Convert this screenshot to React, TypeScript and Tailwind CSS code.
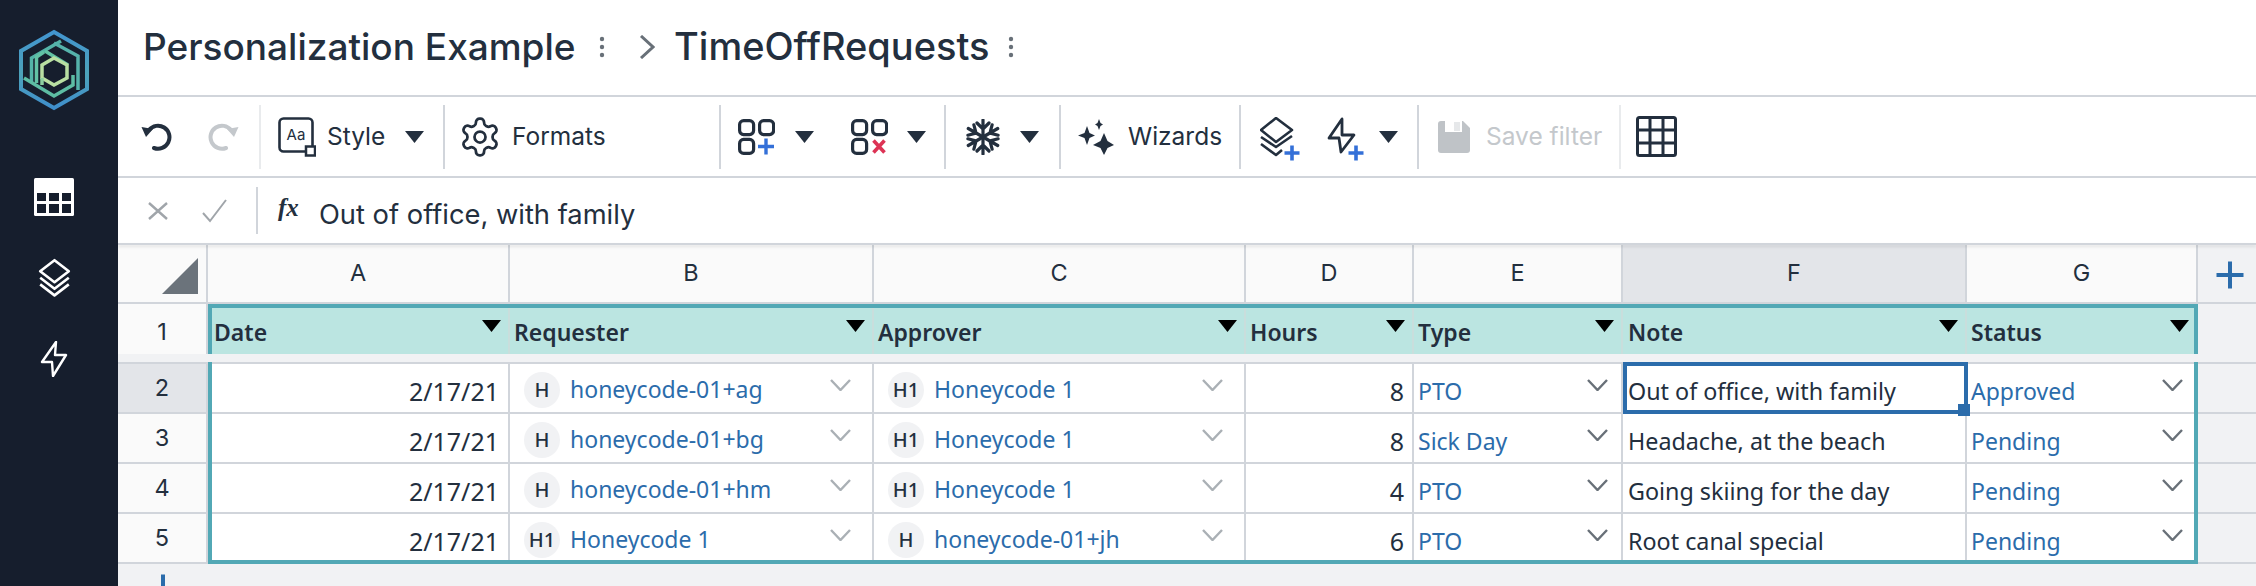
import React from "react";

const cols = "grid grid-cols-[90px_302px_364px_372px_168px_209px_344px_231px]";
const ink = "#232f3e";
const blue = "#2b6cab";
const plusBlue = "#3470d8";

function Tri({ className = "", color = ink }: { className?: string; color?: string }) {
  return (
    <svg width="19" height="12" viewBox="0 0 19 12" className={className}>
      <path d="M0 0H19L9.5 12Z" fill={color} />
    </svg>
  );
}

function Chevron({ dark = false }: { dark?: boolean }) {
  return (
    <svg width="21" height="12" viewBox="0 0 21 12" className="mt-[15px] ml-auto shrink-0">
      <path d="M1 1L10.5 11L20 1" fill="none" stroke={dark ? "#687078" : "#aab0b5"} strokeWidth="2.4" />
    </svg>
  );
}

function Dots() {
  return (
    <svg width="6" height="22" viewBox="0 0 6 22" className="shrink-0">
      <circle cx="3" cy="3" r="2.2" fill="#687078" />
      <circle cx="3" cy="11" r="2.2" fill="#687078" />
      <circle cx="3" cy="19" r="2.2" fill="#687078" />
    </svg>
  );
}

function Logo() {
  return (
    <svg width="76" height="84" viewBox="16 28 76 84">
      <defs>
        <linearGradient id="lg" x1="0" y1="0" x2="0" y2="1">
          <stop offset="0" stopColor="#4295cf" />
          <stop offset="0.55" stopColor="#4da2b9" />
          <stop offset="1" stopColor="#3f8fcc" />
        </linearGradient>
      </defs>
      <path d="M54 32L87 51V89L54 108L21 89V51Z" fill="none" stroke="url(#lg)" strokeWidth="4" />
      <path d="M61 41L31.5 58V83" fill="none" stroke="#54b4a8" strokeWidth="3.5" />
      <path d="M24 78L54 96L73 85V75" fill="none" stroke="#5dbda4" strokeWidth="3.5" />
      <path d="M54 43L78 56V90" fill="none" stroke="#55b3ab" strokeWidth="3.5" />
      <path d="M44 52L36.5 57V83" fill="none" stroke="#62c2a5" strokeWidth="3.5" />
      <path d="M45 51L68 65" fill="none" stroke="#62c2a5" strokeWidth="3.5" />
      <path d="M54 58L67 65V78L54 85L42 78V65Z" fill="none" stroke="#b9dfa2" strokeWidth="3.5" />
      <path d="M42 78V85" fill="none" stroke="#8dd0a0" strokeWidth="3.5" />
    </svg>
  );
}

function Layers({ stroke = "#fff", size = 33 }: { stroke?: string; size?: number }) {
  return (
    <svg width={size} height={size * 1.2} viewBox="0 0 30 36" fill="none" stroke={stroke} strokeWidth="2.4" strokeLinejoin="round">
      <path d="M15 2L28 12L15 22L2 12Z" />
      <path d="M2 18L15 28L28 18" />
      <path d="M2 24L15 34L28 24" />
    </svg>
  );
}

function Bolt({ stroke = "#fff", w = 28, h = 36 }: { stroke?: string; w?: number; h?: number }) {
  return (
    <svg width={w} height={h} viewBox="0 0 28 36" fill="none" stroke={stroke} strokeWidth="2.4" strokeLinejoin="round">
      <path d="M16 1L2 21H12L13 35L26 14H15Z" />
    </svg>
  );
}

function Sep({ light = false }: { light?: boolean }) {
  return <div className={`w-[2px] h-[64px] shrink-0 ${light ? "bg-[#e9ebed]" : "bg-[#d1d5db]"}`} />;
}

function Plus({ x, y, s = 14, w = 3.4, color = plusBlue }: { x: number; y: number; s?: number; w?: number; color?: string }) {
  return <path d={`M${x - s / 2} ${y}H${x + s / 2}M${x} ${y - s / 2}V${y + s / 2}`} stroke={color} strokeWidth={w} fill="none" />;
}

function Squares({ kind }: { kind: "add" | "del" }) {
  return (
    <svg width="37" height="36" viewBox="0 0 37 36" fill="none" stroke={ink} strokeWidth="3.2">
      <rect x="1.6" y="1.6" width="14" height="14" rx="4" />
      <rect x="21.6" y="1.6" width="14" height="14" rx="4" />
      <rect x="1.6" y="20.400" width="14" height="14" rx="4" />
      {kind === "add" ? (
        <Plus x={28} y={27.500} s={16} />
      ) : (
        <path d="M22.500 21.500L33.500 33.500M33.500 21.500L22.500 33.500" stroke="#dd3355" strokeWidth="3.6" />
      )}
    </svg>
  );
}

function Snowflake() {
  const arm = "M17 1V35M11 4L17 10L23 4M11 32L17 26L23 32";
  return (
    <svg width="34" height="36" viewBox="0 0 34 36" fill="none" stroke={ink} strokeWidth="3.2" strokeLinecap="round">
      <path d={arm} />
      <path d={arm} transform="rotate(60 17 18)" />
      <path d={arm} transform="rotate(120 17 18)" />
    </svg>
  );
}

function Sparkles() {
  return (
    <svg width="37" height="36" viewBox="0 0 37 36" fill={ink}>
      <path d="M9 7L11.5 14L17 16.500L11.500 19L9 26L6.500 19L0 16.500L6.500 14Z" />
      <path d="M21 0L22.500 4L25 5.500L22.500 7L21 11L19.500 7L17 5.500L19.500 4Z" />
      <path d="M26 14L29.500 22L36 26L29.500 29L26 36L22.500 29L15 26L22.500 22Z" />
    </svg>
  );
}

function Gear() {
  return (
    <svg width="44" height="44" viewBox="0 0 24 24" fill="none" stroke={ink} strokeWidth="1.5">
      <path d="M12.220 2h-.440a2 2 0 0 0-2 2v.180a2 2 0 0 1-1 1.730l-.430.250a2 2 0 0 1-2 0l-.150-.080a2 2 0 0 0-2.730.730l-.220.380a2 2 0 0 0 .730 2.730l.150.100a2 2 0 0 1 1 1.720v.510a2 2 0 0 1-1 1.740l-.150.090a2 2 0 0 0-.730 2.730l.220.380a2 2 0 0 0 2.730.730l.150-.080a2 2 0 0 1 2 0l.430.250a2 2 0 0 1 1 1.730V20a2 2 0 0 0 2 2h.440a2 2 0 0 0 2-2v-.180a2 2 0 0 1 1-1.730l.430-.250a2 2 0 0 1 2 0l.150.080a2 2 0 0 0 2.730-.730l.220-.390a2 2 0 0 0-.730-2.730l-.150-.080a2 2 0 0 1-1-1.740v-.500a2 2 0 0 1 1-1.740l.150-.090a2 2 0 0 0 .730-2.730l-.220-.380a2 2 0 0 0-2.730-.730l-.150.080a2 2 0 0 1-2 0l-.430-.250a2 2 0 0 1-1-1.730V4a2 2 0 0 0-2-2z" />
      <circle cx="12" cy="12" r="3" />
    </svg>
  );
}

function Toolbar() {
  return (
    <div className="h-[79px] flex items-center shrink-0 font-['Inter',sans-serif] text-[24.5px] text-[#232f3e] whitespace-nowrap">
      <div className="ml-[23px] w-[31px] shrink-0">
        <svg width="31" height="29" viewBox="0 0 31 29" fill="none" stroke={ink} strokeWidth="4" strokeLinecap="round">
          <path d="M8 8A11.500 11.500 0 1 1 13 26" />
          <path d="M0.500 5L12 7L5 15Z" fill={ink} stroke="none" />
        </svg>
      </div>
      <div className="ml-[36px] w-[31px] shrink-0">
        <svg width="31" height="29" viewBox="0 0 31 29" fill="none" stroke="#c4c8cc" strokeWidth="4" strokeLinecap="round">
          <path d="M23 8A11.500 11.500 0 1 0 18 26" />
          <path d="M30.500 5L19 7L26 15Z" fill="#c4c8cc" stroke="none" />
        </svg>
      </div>
      <div className="ml-[20px]"><Sep light /></div>
      <div className="ml-[17px] shrink-0">
        <svg width="38" height="40" viewBox="0 0 38 40" fill="none">
          <rect x="1.500" y="1.500" width="33" height="33" rx="4" stroke={ink} strokeWidth="2.600" />
          <text x="18" y="23" textAnchor="middle" fontSize="15" fontFamily="Inter" fill={ink}>Aa</text>
          <rect x="28" y="29.500" width="9" height="9" fill="#fff" stroke={ink} strokeWidth="2.500" />
        </svg>
      </div>
      <span className="ml-[11px] w-[58px] shrink-0">Style</span>
      <Tri className="ml-[20px] shrink-0" />
      <div className="ml-[19px]"><Sep /></div>
      <div className="ml-[13px] shrink-0"><Gear /></div>
      <span className="ml-[10px] w-[93px] shrink-0">Formats</span>
      <div className="ml-[114px]"><Sep /></div>
      <div className="ml-[17px] shrink-0"><Squares kind="add" /></div>
      <Tri className="ml-[20px] shrink-0" />
      <div className="ml-[37px] shrink-0"><Squares kind="del" /></div>
      <Tri className="ml-[19px] shrink-0" />
      <div className="ml-[18px]"><Sep /></div>
      <div className="ml-[20px] shrink-0"><Snowflake /></div>
      <Tri className="ml-[20px] shrink-0" />
      <div className="ml-[20px]"><Sep /></div>
      <div className="ml-[17px] shrink-0"><Sparkles /></div>
      <span className="ml-[13px] w-[92px] shrink-0">Wizards</span>
      <div className="ml-[19px]"><Sep /></div>
      <div className="ml-[19px] shrink-0 mt-[4px]">
        <svg width="41" height="44" viewBox="0 0 41 44" fill="none" stroke={ink} strokeWidth="2.600" strokeLinejoin="round">
          <path d="M16 1L32 13L16 25L1 13Z" />
          <path d="M1 20L16 30L32 19" />
          <path d="M1 27L16 38L22 33" />
          <Plus x={32} y={36} s={15} w={3.600} />
        </svg>
      </div>
      <div className="ml-[26px] shrink-0 mt-[4px]">
        <svg width="38" height="44" viewBox="0 0 38 44" fill="none" stroke={ink} strokeWidth="2.800" strokeLinejoin="round">
          <path d="M15 2L2 21H12L14 35L27 18H15Z" />
          <Plus x={29} y={36} s={15} w={3.600} />
        </svg>
      </div>
      <Tri className="ml-[14px] shrink-0" />
      <div className="ml-[19px]"><Sep /></div>
      <div className="ml-[19px] shrink-0">
        <svg width="32" height="32" viewBox="0 0 32 32">
          <path d="M3 0H25L32 7V29Q32 32 29 32H3Q0 32 0 29V3Q0 0 3 0Z" fill="#bfc3c7" />
          <rect x="7" y="0" width="17" height="11" fill="#fff" />
          <rect x="16" y="1" width="6" height="9" fill="#e6e8ea" />
        </svg>
      </div>
      <span className="ml-[16px] w-[114px] shrink-0 text-[#c4c8cc]">Save filter</span>
      <div className="ml-[19px]"><Sep light /></div>
      <div className="ml-[15px] shrink-0">
        <svg width="41" height="41" viewBox="0 0 41 41" fill="none" stroke={ink} strokeWidth="3">
          <rect x="1.500" y="1.500" width="38" height="38" rx="2" />
          <path d="M14 1.500V39.500M27 1.500V39.500M1.500 14H39.500M1.500 27H39.500" />
        </svg>
      </div>
    </div>
  );
}

type CellV = { t: string; a?: string };

const rows: { n: string; req: CellV; app: CellV; h: string; type: string; note: string; status: string }[] = [
  { n: "2", req: { t: "honeycode-01+ag", a: "H" }, app: { t: "Honeycode 1", a: "H1" }, h: "8", type: "PTO", note: "Out of office, with family", status: "Approved" },
  { n: "3", req: { t: "honeycode-01+bg", a: "H" }, app: { t: "Honeycode 1", a: "H1" }, h: "8", type: "Sick Day", note: "Headache, at the beach", status: "Pending" },
  { n: "4", req: { t: "honeycode-01+hm", a: "H" }, app: { t: "Honeycode 1", a: "H1" }, h: "4", type: "PTO", note: "Going skiing for the day", status: "Pending" },
  { n: "5", req: { t: "Honeycode 1", a: "H1" }, app: { t: "honeycode-01+jh", a: "H" }, h: "6", type: "PTO", note: "Root canal special", status: "Pending" },
];

function Person({ v }: { v: CellV }) {
  return (
    <div className="h-full flex items-start border-r-2 border-[#d1d5db] bg-white pr-[21px] pl-[14px]">
      <div className="mt-[8px] w-[36px] h-[36px] rounded-full bg-[#f1f2f4] flex items-center justify-center text-[20px] font-medium text-[#232f3e] shrink-0">
        {v.a}
      </div>
      <span className="ml-[10px] mt-[7px] text-[#2b6cab] text-[23px] leading-[36px]">{v.t}</span>
      <Chevron />
    </div>
  );
}

function Pick({ t }: { t: string }) {
  return (
    <div className="h-full flex items-start border-r-2 border-[#d1d5db] bg-white pl-[4px] pr-[13px]">
      <span className="mt-[9px] text-[#2b6cab] text-[23px] leading-[36px]">{t}</span>
      <Chevron dark />
    </div>
  );
}

const headers = [
  { l: "A", t: "Date", cls: "pl-[6px]" },
  { l: "B", t: "Requester", cls: "pl-[4px]" },
  { l: "C", t: "Approver", cls: "pl-[4px]" },
  { l: "D", t: "Hours", cls: "pl-[4px]" },
  { l: "E", t: "Type", cls: "pl-[4px]" },
  { l: "F", t: "Note", cls: "pl-[5px]" },
  { l: "G", t: "Status", cls: "pl-[4px]" },
];

function Sheet() {
  return (
    <div className="relative flex-1 min-h-0 bg-[#f1f2f4] overflow-hidden font-['Noto_Sans',sans-serif] text-[#232f3e]">
      <div className={`${cols} h-[59px] border-b-2 border-[#d1d5db] font-['Inter',sans-serif] text-[23.5px]`}>
        <div className="bg-[#fafafa] border-r-2 border-[#d1d5db] relative">
          <svg width="36" height="36" viewBox="0 0 36 36" className="absolute left-[44px] top-[13px]">
            <path d="M36 0V36H0Z" fill="#6b737b" />
          </svg>
        </div>
        {headers.map((h) => (
          <div
            key={h.l}
            className={`flex items-center justify-center border-r-2 border-[#d1d5db] pb-[2px] ${h.l === "F" ? "bg-[#e3e5e9]" : "bg-[#fafafa]"}`}
          >
            {h.l}
          </div>
        ))}
      </div>
      <div className={`${cols} h-[50px]`}>
        <div className="bg-[#fafafa] flex items-center justify-center font-['Inter',sans-serif] text-[23.5px] border-r-2 border-[#d1d5db] pt-[6px]">1</div>
        {headers.map((h) => (
          <div key={h.l} className={`bg-[#bbe5e1] border-r-2 border-[#c9dedc] flex items-start pr-[7px] ${h.cls}`}>
            <span className="mt-[10px] text-[23px] leading-[36px] font-semibold">{h.t}</span>
            <Tri className="mt-[16px] ml-auto shrink-0" color="#000" />
          </div>
        ))}
      </div>
      <div className="h-[8px]" />
      <div className="border-t-2 border-[#d1d5db]">
        {rows.map((r) => (
          <div key={r.n} className={`${cols} h-[50px] border-b-2 border-[#d1d5db]`}>
            <div className={`flex items-center justify-center font-['Inter',sans-serif] text-[23.5px] border-r-2 border-[#d1d5db] ${r.n === "2" ? "bg-[#e3e5e9]" : "bg-[#fafafa]"}`}>
              {r.n}
            </div>
            <div className="bg-white border-r-2 border-[#d1d5db] flex justify-end items-start pr-[9px]">
              <span className="mt-[9px] text-[25px] leading-[36px]">2/17/21</span>
            </div>
            <Person v={r.req} />
            <Person v={r.app} />
            <div className="bg-white border-r-2 border-[#d1d5db] flex justify-end items-start pr-[8px]">
              <span className="mt-[9px] text-[25px] leading-[36px]">{r.h}</span>
            </div>
            <Pick t={r.type} />
            <div className="bg-white border-r-2 border-[#d1d5db] pl-[5px]">
              <div className="mt-[9px] text-[23.3px] leading-[36px]">{r.note}</div>
            </div>
            <Pick t={r.status} />
          </div>
        ))}
      </div>

      {/* selection overlays */}
      <div className="absolute left-[90px] top-[59px] w-[1990px] h-[50px] border-t-4 border-l-4 border-r-4 border-[#52a8b5] pointer-events-none" />
      <div className="absolute left-[90px] top-[117px] w-[1990px] h-[202px] border-b-4 border-l-4 border-r-4 border-[#52a8b5] pointer-events-none" />
      <div className="absolute left-[1505px] top-[117px] w-[345px] h-[52px] border-4 border-[#2b6cab] pointer-events-none" />
      <div className="absolute left-[1840px] top-[159px] w-[12px] h-[12px] bg-[#2b6cab] pointer-events-none" />

      <svg width="30" height="30" viewBox="0 0 30 30" className="absolute left-[2097px] top-[15px]">
        <Plus x={15} y={15} s={27} w={4} color={blue} />
      </svg>
      <svg width="30" height="30" viewBox="0 0 30 30" className="absolute left-[30px] top-[328px]">
        <Plus x={15} y={15} s={27} w={4} color={blue} />
      </svg>
    </div>
  );
}

export default function App() {
  return (
    <div className="flex w-[2256px] h-[586px] overflow-hidden bg-white">
      <aside className="w-[118px] shrink-0 bg-[#161e2d] flex flex-col items-center">
        <div className="mt-[28px] -translate-x-[5px]"><Logo /></div>
        <svg width="40" height="40" viewBox="0 0 40 40" className="mt-[66px] -translate-x-[5px]">
          <rect x="0" y="0" width="40" height="38" rx="1.500" fill="#fff" />
          <path d="M3 15H12V23H3ZM15 15H25V23H15ZM28 15H37V23H28ZM3 26H12V35H3ZM15 26H25V35H15ZM28 26H37V35H28Z" fill="#161e2d" />
        </svg>
        <div className="mt-[40px] -translate-x-[5px] leading-none"><Layers /></div>
        <div className="mt-[43px] -translate-x-[5px] leading-none"><Bolt /></div>
      </aside>
      <main className="flex-1 min-w-0 flex flex-col">
        <div className="h-[97px] shrink-0 border-b-2 border-[#d1d5db] flex items-center font-['Inter',sans-serif] font-medium text-[37px] text-[#232f3e] pl-[25px] pb-[2px] whitespace-nowrap">
          <span className="w-[433px]">Personalization Example</span>
          <div className="ml-[23px]"><Dots /></div>
          <svg width="16" height="24" viewBox="0 0 16 24" className="ml-[34px]">
            <path d="M2 1L14 12L2 23" fill="none" stroke="#687078" strokeWidth="3" />
          </svg>
          <span className="ml-[19px] w-[314px] text-[38px]">TimeOffRequests</span>
          <div className="ml-[20px]"><Dots /></div>
        </div>
        <div className="border-b-2 border-[#d1d5db]"><Toolbar /></div>
        <div className="h-[65px] shrink-0 flex items-center font-['Inter',sans-serif] text-[#232f3e]">
          <svg width="20" height="18" viewBox="0 0 20 18" className="ml-[30px]">
            <path d="M1 1L19 17M19 1L1 17" stroke="#a0a5aa" strokeWidth="2.400" />
          </svg>
          <svg width="25" height="24" viewBox="0 0 25 24" className="ml-[34px]">
            <path d="M1 14L8 22L24 1" fill="none" stroke="#a0a5aa" strokeWidth="2" />
          </svg>
          <div className="ml-[29px] w-[2px] h-[47px] bg-[#d1d5db]" />
          <span className="ml-[20px] w-[22px] font-['Liberation_Serif',serif] italic font-bold text-[25px] leading-none -mt-[6px]">fx</span>
          <span className="ml-[19px] text-[27.3px] mt-[9px] whitespace-nowrap">Out of office, with family</span>
        </div>
        <div className="h-[2px] bg-[#d1d5db] shadow-[0_2px_3px_rgba(0,0,0,0.1)] relative z-10" />
        <Sheet />
      </main>
    </div>
  );
}
